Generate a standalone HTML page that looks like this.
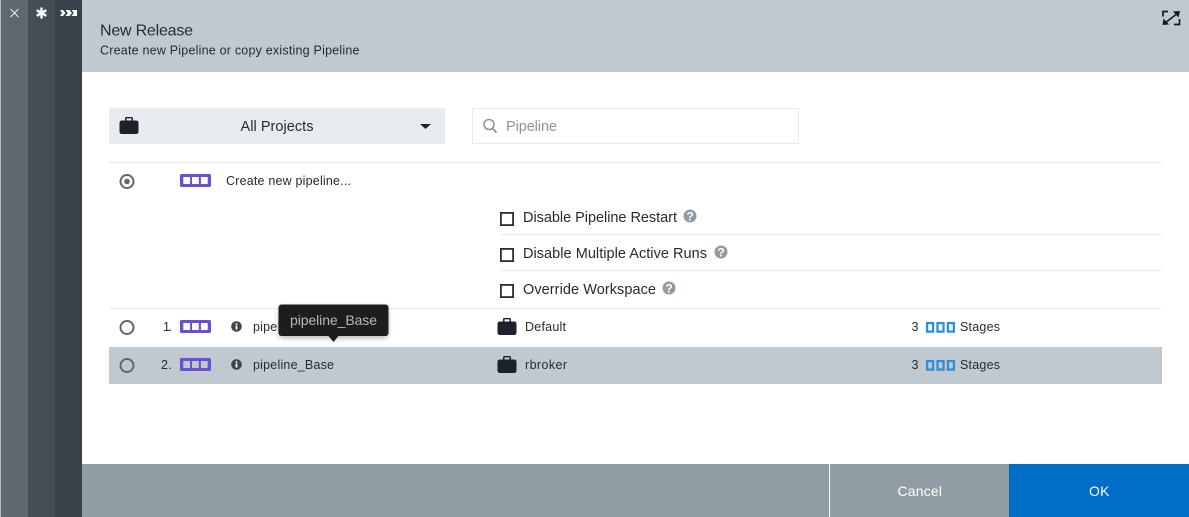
<!DOCTYPE html>
<html><head><meta charset="utf-8"><style>
html,body{margin:0;padding:0;width:1189px;height:517px;overflow:hidden;background:#fff}
svg{display:block}
text{font-family:"Liberation Sans",sans-serif;fill:#262b31}
</style></head><body>
<svg width="1189" height="517" viewBox="0 0 1189 517" xmlns="http://www.w3.org/2000/svg">
<defs>
<filter id="soft" x="-20%" y="-40%" width="140%" height="190%"><feGaussianBlur stdDeviation="3"/></filter>
<g id="case"><path fill-rule="evenodd" d="M0 6Q0 3.500 2.500 3.500H5.500V1.500Q5.500 0 7 0H12Q13.500 0 13.500 1.500V3.500H16.500Q19 3.500 19 6V14.500Q19 17 16.500 17H2.500Q0 17 0 14.500ZM7 1.400V3.500H12V1.400Z" fill="#1c2229"/></g>
<g id="pipe"><rect x="0" y="0" width="31" height="13" rx="1.500" fill="#6a4fd0"/><rect x="3.300" y="3" width="6.800" height="7" fill="#fff"/><rect x="12" y="3" width="6.800" height="7" fill="#fff"/><rect x="20.900" y="3" width="6.800" height="7" fill="#fff"/></g>
<g id="pipeg"><rect x="0" y="0" width="31" height="13" rx="1.500" fill="#6a4fd0"/><rect x="3.300" y="3" width="6.800" height="7" fill="#c1c9d0"/><rect x="12" y="3" width="6.800" height="7" fill="#c1c9d0"/><rect x="20.900" y="3" width="6.800" height="7" fill="#c1c9d0"/></g>
<g id="stage" fill="none" stroke="#2b8fdc" stroke-width="2.300"><rect x="1.100" y="1.100" width="6" height="8.500"/><rect x="11.500" y="1.100" width="6" height="8.500"/><rect x="21.900" y="1.100" width="6" height="8.500"/></g>
<g id="help"><circle r="6.500" fill="#909ca5"/><text x="0" y="4.300" font-size="12" font-weight="700" text-anchor="middle" style="fill:#fff">?</text></g>
<g id="info"><circle r="5.300" fill="#3d434b"/><rect x="-.9" y="-1" width="1.800" height="4" fill="#fff"/><rect x="-.9" y="-3.200" width="1.800" height="1.500" fill="#fff"/></g>
</defs>

<rect x="0" y="0" width="1" height="517" fill="#b9bdc1"/>
<rect x="1" y="0" width="27" height="517" fill="#5f6770"/>
<rect x="28" y="0" width="27" height="517" fill="#454d57"/>
<rect x="55" y="0" width="27" height="517" fill="#39414a"/>
<path d="M10.500 9L18.500 17M18.500 9L10.500 17" stroke="#e8eaec" stroke-width="1.100" fill="none"/>
<path d="M41.500 7.500V18.500M36.700 10.200L46.300 15.800M46.300 10.200L36.700 15.800" stroke="#fff" stroke-width="2.400" fill="none"/>
<path d="M60 10H63L65.500 13L63 16H60L62 13ZM65.500 10H69.500L72 13L69.500 16H65.500L67.800 13ZM71.500 10H77V16H71.500L73.800 13Z" fill="#fff"/>

<rect x="82" y="0" width="1107" height="72" fill="#c1c9d0"/>
<text x="100" y="35.500" font-size="16" textLength="93">New Release</text>
<text x="100" y="54.500" font-size="12.500" textLength="259.500">Create new Pipeline or copy existing Pipeline</text>
<path d="M1168 11.500H1163V16.500M1174 24.500H1179.500V19" fill="none" stroke="#15191d" stroke-width="1.700"/>
<path d="M1165 23L1178 13" stroke="#15191d" stroke-width="1.500"/>
<path d="M1162.500 25L1169 24.500L1163.500 18.500ZM1180 11L1173 11.500L1178.500 17.500Z" fill="#15191d"/>

<rect x="109" y="108" width="336" height="36" fill="#e7ecf0"/>
<use href="#case" x="119.500" y="117"/>
<text x="240.500" y="131" font-size="14.500" textLength="73">All Projects</text>
<path d="M420 124H431L425.500 129Z" fill="#1c2229"/>
<rect x="472.500" y="108.500" width="326" height="35" fill="#fff" stroke="#e6ebef"/>
<circle cx="489" cy="124.500" r="5" fill="none" stroke="#8a949c" stroke-width="1.500"/>
<path d="M492.500 128.500L496.500 132.500" stroke="#8a949c" stroke-width="1.700"/>
<text x="506" y="131" font-size="14.500" textLength="51" style="fill:#8a949c">Pipeline</text>

<rect x="109" y="162" width="1053" height="1" fill="#e6ebef"/>
<circle cx="127" cy="181.500" r="6.500" fill="none" stroke="#5f6770" stroke-width="2"/>
<circle cx="127" cy="181.500" r="2.800" fill="#5f6770"/>
<use href="#pipe" x="180" y="174"/>
<text x="226" y="185" font-size="12.500" textLength="125">Create new pipeline...</text>

<rect x="500.900" y="212.900" width="12.200" height="12.200" fill="#fff" stroke="#2a2f35" stroke-width="1.800"/>
<text x="523" y="222" font-size="14.500" textLength="154">Disable Pipeline Restart</text>
<use href="#help" x="690" y="216"/>
<rect x="500" y="234" width="662" height="1" fill="#e6ebef"/>
<rect x="500.900" y="248.900" width="12.200" height="12.200" fill="#fff" stroke="#2a2f35" stroke-width="1.800"/>
<text x="523" y="258" font-size="14.500" textLength="184">Disable Multiple Active Runs</text>
<use href="#help" x="721" y="252"/>
<rect x="500" y="270" width="662" height="1" fill="#e6ebef"/>
<rect x="500.900" y="284.900" width="12.200" height="12.200" fill="#fff" stroke="#2a2f35" stroke-width="1.800"/>
<text x="523" y="294" font-size="14.500" textLength="133">Override Workspace</text>
<use href="#help" x="669" y="288"/>
<rect x="109" y="308" width="1053" height="1" fill="#e6ebef"/>

<circle cx="127" cy="327.500" r="6.500" fill="none" stroke="#5f6770" stroke-width="2"/>
<text x="163" y="331" font-size="12.500" textLength="9">1.</text>
<use href="#pipe" x="180" y="320"/>
<use href="#info" x="236.500" y="326.500"/>
<text x="253" y="331" font-size="12.500" textLength="81">pipeline_Base</text>
<use href="#case" x="497.500" y="318"/>
<text x="525" y="331" font-size="12.500" textLength="41">Default</text>
<text x="911.500" y="331" font-size="12.500">3</text>
<use href="#stage" x="926" y="322"/>
<text x="960" y="331" font-size="12.500" textLength="40">Stages</text>

<rect x="109" y="347" width="1053" height="37" fill="#c1c9d0"/>
<circle cx="127" cy="365.500" r="6.500" fill="none" stroke="#5f6770" stroke-width="2"/>
<text x="161" y="369" font-size="12.500" textLength="11">2.</text>
<use href="#pipeg" x="180" y="358"/>
<use href="#info" x="236.500" y="364.500"/>
<text x="253" y="369" font-size="12.500" textLength="81">pipeline_Base</text>
<use href="#case" x="497.500" y="356"/>
<text x="525" y="369" font-size="12.500" textLength="42">rbroker</text>
<text x="911.500" y="369" font-size="12.500">3</text>
<use href="#stage" x="926" y="360"/>
<text x="960" y="369" font-size="12.500" textLength="40">Stages</text>

<rect x="279" y="307" width="109" height="31" rx="4" fill="#000" opacity=".3" filter="url(#soft)"/>
<rect x="278.500" y="304.500" width="110" height="31.500" rx="3" fill="#1d1d1e"/>
<path d="M328.500 336H338.500L333.500 342Z" fill="#1d1d1e"/>
<text x="290" y="325" font-size="14" textLength="87" style="fill:#b8b8b8">pipeline_Base</text>

<rect x="82" y="464" width="1107" height="53" fill="#919da5"/>
<rect x="829" y="464" width="1" height="53" fill="#fff"/>
<rect x="1009" y="464" width="180" height="53" fill="#006dc6"/>
<text x="897.500" y="496" font-size="14" textLength="44.500" style="fill:#fff">Cancel</text>
<text x="1089" y="496" font-size="14" textLength="20.500" style="fill:#fff">OK</text>
</svg>
</body></html>
